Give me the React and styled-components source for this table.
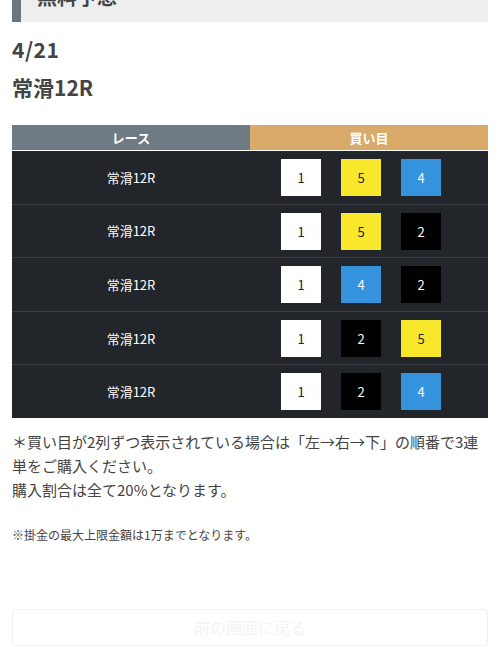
import React from 'react'
import styled, { createGlobalStyle } from "styled-components";

const races = [
    { name: "常滑12R", picks: [1, 5, 4] },
    { name: "常滑12R", picks: [1, 5, 2] },
    { name: "常滑12R", picks: [1, 4, 2] },
    { name: "常滑12R", picks: [1, 2, 5] },
    { name: "常滑12R", picks: [1, 2, 4] },
]

function App() {
  return (
    <Page>
        <GlobalStyle />
        <Title>無料予想</Title>
        <DateHead>4/21</DateHead>
        <RaceHead>常滑12R</RaceHead>
        <Table>
            <thead>
                <tr>
                    <HeadCell>レース</HeadCell>
                    <HeadCell gold>買い目</HeadCell>
                </tr>
            </thead>
            <tbody>
                {races.map((r, i) => (
                    <Row key={i}>
                        <RaceCell>{r.name}</RaceCell>
                        <PickCell>
                            <Picks>
                                {r.picks.map((p, j) => (
                                    <Box key={j} n={p}>{p}</Box>
                                ))}
                            </Picks>
                        </PickCell>
                    </Row>
                ))}
            </tbody>
        </Table>
        <Note>
            ＊買い目が2列ずつ表示されている場合は「左→右→下」の順番で3連単をご購入ください。<br />
            購入割合は全て20%となります。
        </Note>
        <Small>※掛金の最大上限金額は1万までとなります。</Small>
        <BackButton>前の画面に戻る</BackButton>
    </Page>
  )
}

export default App

const GlobalStyle = createGlobalStyle`
    body{
        margin: 0;
        background: #fff;
        font-family: "Noto Sans CJK JP", "Noto Sans", sans-serif;
        overflow: hidden;
    }
`

const Page = styled.div`
    padding: 0 12px;
    color: #444;
`

const Title = styled.h2`
    margin: -28px 0 0;
    padding: 10px 16px;
    background: #eeeeee;
    border-left: 9px solid #6c747d;
    font-size: 20px;
    line-height: 30px;
    font-weight: bold;
    color: #444;
`

const DateHead = styled.h3`
    margin: 12px 0 0;
    font-size: 21px;
    line-height: 30px;
    font-weight: bold;
    letter-spacing: 0.5px;
`

const RaceHead = styled.h3`
    margin: 8px 0 0;
    font-size: 21px;
    line-height: 30px;
    font-weight: bold;
`

const Table = styled.table`
    width: 100%;
    margin-top: 23px;
    border-collapse: collapse;
    table-layout: fixed;
`

const HeadCell = styled.th`
    height: 25px;
    padding: 0;
    background: ${p => p.gold ? "#d9aa6a" : "#6f7b84"};
    color: #fff;
    font-size: 13px;
    font-weight: bold;
    text-align: center;
    border-bottom: 1px solid #fff;
`

const Row = styled.tr`
    background: #222529;
    border-top: 1px solid #3b3e42;
    &:first-child{
        border-top: none;
    }
`

const RaceCell = styled.td`
    color: #fff;
    font-size: 13px;
    text-align: center;
    padding: 0;
`

const PickCell = styled.td`
    padding: 8px 0 7.6px 31px;
`

const Picks = styled.div`
    display: flex;
    gap: 20px;
`

const boxColors = {
    1: ["#ffffff", "#222"],
    2: ["#000000", "#fff"],
    4: ["#3592dc", "#fff"],
    5: ["#f9e72b", "#222"],
}

const Box = styled.div`
    width: 40px;
    height: 37px;
    display: flex;
    align-items: center;
    justify-content: center;
    font-size: 13px;
    background: ${p => boxColors[p.n][0]};
    color: ${p => boxColors[p.n][1]};
`

const Note = styled.p`
    margin: 12px 0 0;
    font-size: 15px;
    line-height: 24px;
    color: #444;
`

const Small = styled.p`
    margin: 24px 0 0;
    font-size: 12px;
    line-height: 18px;
    color: #444;
`

const BackButton = styled.div`
    margin-top: 65px;
    height: 35px;
    border: 1px solid #f0f0f0;
    border-radius: 4px;
    display: flex;
    align-items: center;
    justify-content: center;
    font-size: 16px;
    color: #f3f3f3;
`
